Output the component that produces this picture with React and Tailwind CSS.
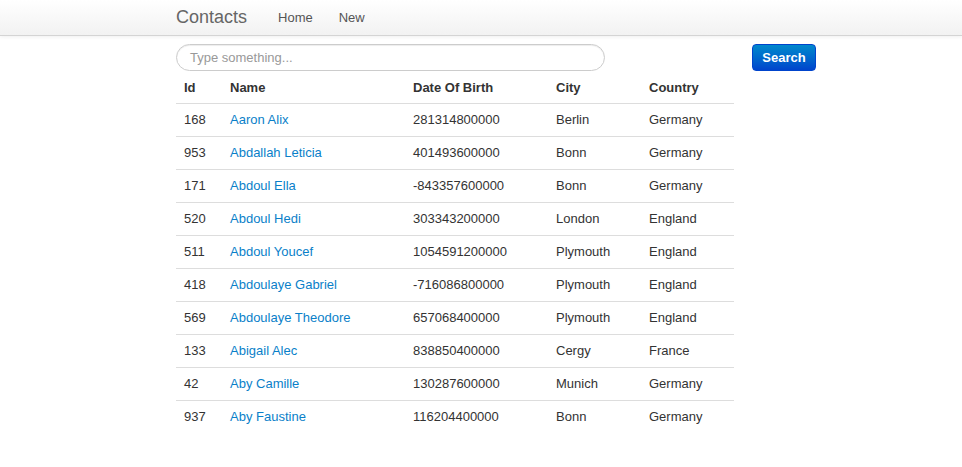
const contacts = [
  { id: 168, name: 'Aaron Alix', dob: '281314800000', city: 'Berlin', country: 'Germany' },
  { id: 953, name: 'Abdallah Leticia', dob: '401493600000', city: 'Bonn', country: 'Germany' },
  { id: 171, name: 'Abdoul Ella', dob: '-843357600000', city: 'Bonn', country: 'Germany' },
  { id: 520, name: 'Abdoul Hedi', dob: '303343200000', city: 'London', country: 'England' },
  { id: 511, name: 'Abdoul Youcef', dob: '1054591200000', city: 'Plymouth', country: 'England' },
  { id: 418, name: 'Abdoulaye Gabriel', dob: '-716086800000', city: 'Plymouth', country: 'England' },
  { id: 569, name: 'Abdoulaye Theodore', dob: '657068400000', city: 'Plymouth', country: 'England' },
  { id: 133, name: 'Abigail Alec', dob: '838850400000', city: 'Cergy', country: 'France' },
  { id: 42, name: 'Aby Camille', dob: '130287600000', city: 'Munich', country: 'Germany' },
  { id: 937, name: 'Aby Faustine', dob: '116204400000', city: 'Bonn', country: 'Germany' },
];

export default function App() {
  return (
    <div className="min-h-[467px] bg-white text-[#333] text-[13px] font-['Liberation_Sans',Arial,sans-serif]">
      {/* Navbar */}
      <div className="h-[36px] border-b border-[#d4d4d4] bg-gradient-to-b from-white to-[#f2f2f2] shadow-[0_1px_4px_rgba(0,0,0,0.065)]">
        <div className="flex items-center h-[35px] pl-[176px]">
          <span className="text-[18px] text-[#666] mr-[31px]">Contacts</span>
          <a className="text-[#555] mr-[26px]">Home</a>
          <a className="text-[#555]">New</a>
        </div>
      </div>

      <div className="pl-[176px] w-[816px]">
        {/* Search form */}
        <div className="flex items-center mt-[8px] h-[27px]">
          <div className="w-[429px] h-[27px] rounded-full border border-[#ccc] flex items-center px-[13px] text-[#999] shadow-[inset_0_1px_1px_rgba(0,0,0,0.075)]">
            Type something...
          </div>
          <button className="ml-auto w-[64px] h-[27px] rounded-[4px] border border-[#0044cc] bg-gradient-to-b from-[#0088cc] to-[#0044cc] text-white font-bold text-[13px]">
            Search
          </button>
        </div>

        {/* Table */}
        <table className="w-[558px] border-collapse table-fixed">
          <colgroup>
            <col className="w-[46px]" />
            <col className="w-[183px]" />
            <col className="w-[143px]" />
            <col className="w-[93px]" />
            <col className="w-[93px]" />
          </colgroup>
          <thead>
            <tr className="h-[32px] text-left">
              <th className="px-[8px] pt-[1px] font-bold">Id</th>
              <th className="px-[8px] pt-[1px] font-bold">Name</th>
              <th className="px-[8px] pt-[1px] font-bold">Date Of Birth</th>
              <th className="px-[8px] pt-[1px] font-bold">City</th>
              <th className="px-[8px] pt-[1px] font-bold">Country</th>
            </tr>
          </thead>
          <tbody>
            {contacts.map(c => (
              <tr key={c.id} className="h-[33px] border-t border-[#ddd]">
                <td className="px-[8px]">{c.id}</td>
                <td className="px-[8px]"><a className="text-[#0a7fc9]">{c.name}</a></td>
                <td className="px-[8px]">{c.dob}</td>
                <td className="px-[8px]">{c.city}</td>
                <td className="px-[8px]">{c.country}</td>
              </tr>
            ))}
          </tbody>
        </table>
      </div>
    </div>
  );
}
